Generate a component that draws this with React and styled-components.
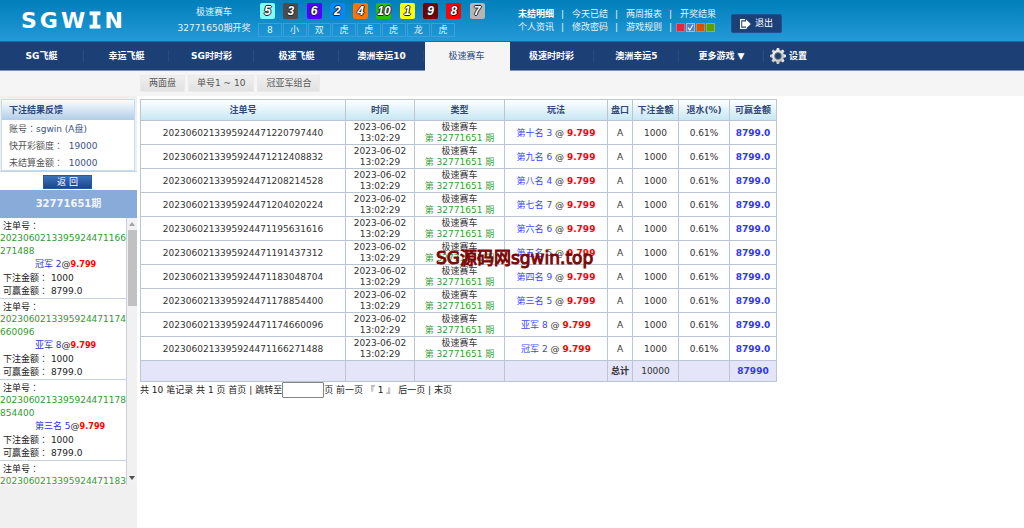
import React from "react";
import styled, { createGlobalStyle } from "styled-components";

const GlobalStyle = createGlobalStyle`
  *, *::before, *::after { box-sizing: border-box; }
  body {
    margin: 0;
    background: #fff;
    color: #333;
    font-family: "DejaVu Sans", "Noto Sans CJK SC", sans-serif;
    font-size: 9px;
    line-height: 13px;
  }
  button, input { font: inherit; }
  a { color: inherit; text-decoration: none; }
`;

const Page = styled.div`
  display: flex;
  flex-direction: column;
  min-height: 100vh;
`;

/* ---------- header ---------- */
const Header = styled.header`
  display: flex;
  align-items: flex-start;
  height: 42px;
  background: linear-gradient(#007fbb, #2499d7);
  border-bottom: 1px solid #1b6ca6;
  color: #e4f3fb;
`;

const Logo = styled.div`
  display: flex;
  gap: 3px;
  width: 150px;
  padding: 8px 0 0 21px;
  color: #fff;
  font-size: 22px;
  font-weight: bold;
  line-height: 26px;
`;

const SlabLetter = styled.span`
  font-family: "DejaVu Sans Mono", monospace;
  -webkit-text-stroke: 1px #fff;
`;

const DrawTitle = styled.div`
  width: 108px;
  margin-right: 2px;
  padding: 4px 0 0 20px;
  text-align: center;
  line-height: 16px;
  white-space: nowrap;
`;

const Draw = styled.div`
  display: flex;
  flex-direction: column;
  gap: 4px;
  width: 258px;
  padding-top: 3px;
`;

const Balls = styled.div`
  display: grid;
  grid-template-columns: repeat(10, 1fr);
  width: 233px;
`;

const Ball = styled.span`
  width: 15px;
  height: 16px;
  border-radius: 2px;
  background: ${(p) => p.$color};
  color: #fff;
  font-size: 12px;
  font-weight: bold;
  font-style: italic;
  line-height: 16px;
  display: flex;
  justify-content: center;
  font-family: "Liberation Sans", sans-serif;
  text-shadow: 1px 0 #222, -1px 0 #222, 0 1px #222, 0 -1px #222;
`;

const Traits = styled.div`
  display: grid;
  grid-template-columns: repeat(8, 1fr);
  gap: 1px;
  width: 197px;
  margin-left: -2px;
`;

const Trait = styled.span`
  height: 14px;
  border: 1px solid #36a1da;
  text-align: center;
  line-height: 12px;
`;

const Links = styled.nav`
  display: grid;
  grid-template-columns: repeat(4, 36px);
  column-gap: 18px;
  padding-top: 8px;
  width: 213px;
  white-space: nowrap;
`;

const TopLink = styled.a`
  position: relative;
  font-weight: ${(p) => (p.$strong ? "bold" : "normal")};
  color: ${(p) => (p.$strong ? "#fff" : "#e4f3fb")};
  &:not(:nth-child(4n + 1))::before {
    content: "|";
    position: absolute;
    left: -11px;
  }
`;

const Skins = styled.div`
  position: relative;
  display: flex;
  gap: 1px;
  margin-left: -4px;
  padding-top: 2px;
  &::before {
    content: "|";
    position: absolute;
    top: 0;
    left: -7px;
  }
`;

const Skin = styled.button`
  display: block;
  width: 9px;
  height: 9px;
  padding: 0;
  border: 1px solid ${(p) => p.$edge};
  background: ${(p) => p.$color};
  svg { display: block; }
`;

const Logout = styled.button`
  display: flex;
  align-items: center;
  justify-content: center;
  gap: 4px;
  width: 51px;
  height: 19px;
  margin-top: 14px;
  padding: 0;
  border: 1px solid #1d5490;
  border-radius: 2px;
  background: #1c4078;
  color: #fff;
`;

/* ---------- navigation ---------- */
const Nav = styled.nav`
  display: flex;
  height: 29px;
  background: #1c4076;
  border-bottom: 1px solid #7d92b6;
  color: #fff;
  font-weight: bold;
`;

const NavItem = styled.a`
  width: 85px;
  height: ${(p) => (p.$active ? "29px" : "28px")};
  padding-right: 2px;
  line-height: 28px;
  text-align: center;
  background: ${(p) =>
    p.$active
      ? "#f5f5f5"
      : "linear-gradient(#24507f, #24507f) right 1px center / 1px 12px no-repeat"};
  color: ${(p) => (p.$active ? "#2b4a7c" : "#fff")};
  font-weight: ${(p) => (p.$active ? "normal" : "bold")};
`;

const Settings = styled.a`
  display: flex;
  align-items: center;
  gap: 3px;
  padding-left: 5px;
`;

const SubNav = styled.div`
  display: flex;
  gap: 3px;
  height: 25px;
  padding: 4px 0 0 140px;
  background: #f5f5f5;
`;

const SubButton = styled.button`
  height: 17px;
  padding: 0 8px;
  border: 1px solid #eaeaea;
  background: linear-gradient(#efefef, #e2e2e2);
  color: #555;
  line-height: 15px;
`;

/* ---------- body ---------- */
const Body = styled.div`
  display: flex;
  flex: 1;
`;

const Sidebar = styled.aside`
  width: 137px;
  flex: none;
  background: #f0f0f0;
`;

const Account = styled.section`
  margin: 3px 2px 0 1px;
  height: 72px;
  border: 1px solid #c3dcf2;
  background: #fff;
`;

const AccountTitle = styled.h2`
  margin: 0;
  height: 20px;
  padding-left: 7px;
  background: linear-gradient(#fafcfe, #b2cee8);
  color: #2a4878;
  font-size: 9px;
  line-height: 21px;
`;

const AccountLine = styled.p`
  margin: 0;
  padding-left: 7px;
  height: 17px;
  line-height: 17px;
  color: #555;
  white-space: pre;
`;

const AccountValue = styled.span`
  color: #3a5285;
`;

/* full-width colon that sits in the middle of its cell */
const Colon = styled.span`
  font-family: "Noto Sans CJK TC", sans-serif;
  &::before { content: "："; }
`;

const BackRow = styled.div`
  display: flex;
  justify-content: center;
  height: 19px;
  padding-top: 3px;
  padding-right: 2px;
  background: #fff;
  border-top: 1px solid #c6d3e0;
`;

const BackButton = styled.button`
  width: 49px;
  height: 14px;
  padding: 0;
  border: 1px solid #2a59a0;
  background: linear-gradient(#3a72b8, #1d4690);
  color: #fff;
  line-height: 11px;
`;

const Period = styled.div`
  height: 28px;
  background: #89abd9;
  color: #f2f6fc;
  font-size: 10px;
  font-weight: bold;
  line-height: 28px;
  text-align: center;
`;

const BetScroller = styled.div`
  display: flex;
  height: 267px;
`;

const BetList = styled.ul`
  flex: 1;
  margin: 0;
  padding: 0;
  list-style: none;
  overflow: hidden;
  background: #fff;
`;

const BetItem = styled.li`
  padding: 1px 0;
  border-bottom: 1px solid #c9d0dc;
  color: #222;
`;

const BetLine = styled.div`
  padding-left: 3px;
  height: 13px;
  white-space: pre;
`;

const BetNumber = styled.div`
  color: #329a32;
  white-space: pre;
`;

const BetPick = styled.div`
  padding-left: 35px;
`;

const ScrollTrack = styled.div`
  display: flex;
  flex-direction: column;
  align-items: center;
  justify-content: space-between;
  flex: none;
  width: 11px;
  border-left: 1px solid #c9d0dc;
  background: #f1f1f1;
  padding: 4px 0 5px;
`;

const ScrollThumb = styled.div`
  width: 9px;
  height: 76px;
  margin: 4px 0 auto;
  background: #c1c1c1;
`;

const Main = styled.main`
  position: relative;
  flex: 1;
  padding: 3px 3px 0;
`;

const Table = styled.table`
  width: 636px;
  table-layout: fixed;
  border-collapse: collapse;
  line-height: 11px;
  text-align: center;
  white-space: nowrap;
  color: #333;
`;

const Th = styled.th`
  height: 21px;
  padding: 0;
  border: 1px solid #bcc5d2;
  color: #33487a;
`;

const HeadRow = styled.tr`
  background: linear-gradient(#fff, #c3e6f3);
`;

const Td = styled.td`
  height: 24px;
  padding: 1px 0 0;
  border: 1px solid #bcc5d2;
`;

const TotalRow = styled.tr`
  background: #e4e5f9;
  ${Td} { height: 21px; }
`;

const Blue = styled.span`
  color: #2836d6;
`;

const Pick = styled.span`
  color: #3b46ff;
`;

const Win = styled.b`
  color: #2f38ef;
`;

const Odds = styled.b`
  color: #f00;
`;

const SideOdds = styled.b`
  color: #f00;
  font-family: "DejaVu Sans Condensed", "DejaVu Sans", sans-serif;
`;

const Green = styled.span`
  color: #37a137;
`;

const Pager = styled.div`
  display: flex;
  align-items: center;
  height: 16px;
  white-space: pre;
  color: #222;
`;

const PageInput = styled.input`
  width: 42px;
  height: 16px;
  padding: 0 2px;
  border: 1px solid #858585;
  border-radius: 1px;
  background: #fff;
`;

const Watermark = styled.div`
  position: absolute;
  top: 152px;
  left: 299px;
  color: #7c0808;
  font-size: 17px;
  line-height: 20px;
  white-space: nowrap;
  -webkit-text-stroke: 1px #7c0808;
`;

const balls = [
  [5, "#80ffff"], [3, "#4c4c4c"], [6, "#5200ff"], [2, "#0089ff"], [4, "#ff7300"],
  [10, "#26c000"], [1, "#ffff00"], [9, "#760000"], [8, "#ff0000"], [7, "#b5b5b5"],
];
const traits = ["8", "小", "双", "虎", "虎", "虎", "龙", "虎"];
const games = [
  "SG飞艇", "幸运飞艇", "SG时时彩", "极速飞艇", "澳洲幸运10",
  "极速赛车", "极速时时彩", "澳洲幸运5", "更多游戏 ▼",
];
const bets = [
  ["2023060213395924471220797440", "第十名 3"],
  ["2023060213395924471212408832", "第九名 6"],
  ["2023060213395924471208214528", "第八名 4"],
  ["2023060213395924471204020224", "第七名 7"],
  ["2023060213395924471195631616", "第六名 6"],
  ["2023060213395924471191437312", "第五名 5"],
  ["2023060213395924471183048704", "第四名 9"],
  ["2023060213395924471178854400", "第三名 5"],
  ["2023060213395924471174660096", "亚军 8"],
  ["2023060213395924471166271488", "冠军 2"],
];
const recent = [...bets].reverse().slice(0, 4);
const columns = [
  ["注单号", 205], ["时间", 69], ["类型", 90], ["玩法", 103], ["盘口", 25],
  ["下注金额", 46], ["退水(%)", 51], ["可赢金额", 47],
];

const GearIcon = () => (
  <svg width="16" height="16" viewBox="-8 -8 16 16" aria-hidden="true">
    <defs>
      <linearGradient id="metal" x1="0" y1="0" x2="1" y2="1">
        <stop offset="0" stopColor="#fff" />
        <stop offset="1" stopColor="#b4b4b0" />
      </linearGradient>
    </defs>
    <g fill="url(#metal)">
      {[0, 45, 90, 135].map((a) => (
        <path key={a} transform={`rotate(${a})`} d="M-1.8 -5 L-1.2 -8 H1.2 L1.8 -5 V5 L1.2 8 H-1.2 L-1.8 5 Z" />
      ))}
      <circle r="6" />
    </g>
    <circle r="3.4" fill="#1c4076" stroke="#85857f" strokeWidth="0.8" />
  </svg>
);

const ExitIcon = () => (
  <svg width="11" height="10" viewBox="0 0 11 10" aria-hidden="true">
    <path d="M5 .6 H.6 V9.4 H6.5" fill="none" stroke="#fff" strokeWidth="1.2" />
    <path d="M2.2 2.4 H6 V.6 L10.8 5 L6 9.4 V7.6 H2.2 Z" fill="#fff" />
  </svg>
);

export default function App() {
  return (
    <Page>
      <GlobalStyle />
      <Header>
        <Logo>
          <span>S</span><span>G</span><span>W</span><SlabLetter>I</SlabLetter><span>N</span>
        </Logo>
        <DrawTitle>
          <div>极速赛车</div>
          <div>32771650期开奖</div>
        </DrawTitle>
        <Draw>
          <Balls>
            {balls.map(([n, c]) => <Ball key={n} $color={c}>{n}</Ball>)}
          </Balls>
          <Traits>
            {traits.map((t, i) => <Trait key={i}>{t}</Trait>)}
          </Traits>
        </Draw>
        <Links>
          <TopLink href="#" $strong>未结明细</TopLink>
          <TopLink href="#">今天已结</TopLink>
          <TopLink href="#">两周报表</TopLink>
          <TopLink href="#">开奖结果</TopLink>
          <TopLink href="#">个人资讯</TopLink>
          <TopLink href="#">修改密码</TopLink>
          <TopLink href="#">游戏规则</TopLink>
          <Skins>
            <Skin aria-label="red" $color="#e0283c" $edge="#e8606c" />
            <Skin aria-label="blue" $color="#4f82c6" $edge="#9db9dd">
              <svg width="7" height="7" viewBox="0 0 7 7">
                <path d="M1 3.6 L2.8 6 L6 .8" fill="none" stroke="#fff" strokeWidth="1.1" />
              </svg>
            </Skin>
            <Skin aria-label="orange" $color="#d75200" $edge="#d9803c" />
            <Skin aria-label="green" $color="#5fa000" $edge="#88b94c" />
          </Skins>
        </Links>
        <Logout><ExitIcon />退出</Logout>
      </Header>
      <Nav>
        {games.map((g) => <NavItem key={g} href="#" $active={g === "极速赛车"}>{g}</NavItem>)}
        <Settings href="#"><GearIcon />设置</Settings>
      </Nav>
      <SubNav>
        <SubButton>两面盘</SubButton>
        <SubButton>单号1 ~ 10</SubButton>
        <SubButton>冠亚军组合</SubButton>
      </SubNav>
      <Body>
        <Sidebar>
          <Account>
            <AccountTitle>下注结果反馈</AccountTitle>
            <AccountLine>账号<Colon /><AccountValue>sgwin (A盘)</AccountValue></AccountLine>
            <AccountLine>快开彩额度<Colon />  <AccountValue>19000</AccountValue></AccountLine>
            <AccountLine>未结算金额<Colon />  <AccountValue>10000</AccountValue></AccountLine>
          </Account>
          <BackRow><BackButton>返 回</BackButton></BackRow>
          <Period>32771651期</Period>
          <BetScroller>
            <BetList>
              {recent.map(([id, pick]) => (
                <BetItem key={id}>
                  <BetLine>注单号<Colon /></BetLine>
                  <BetNumber>{id.slice(0, 22)}{"\n"}{id.slice(22)}</BetNumber>
                  <BetPick><Blue>{pick}</Blue>@<SideOdds>9.799</SideOdds></BetPick>
                  <BetLine>下注金额<Colon /> 1000</BetLine>
                  <BetLine>可赢金额<Colon /> 8799.0</BetLine>
                </BetItem>
              ))}
            </BetList>
            <ScrollTrack>
              <svg width="6" height="4" viewBox="0 0 6 4"><path d="M0 4 L3 0 L6 4 Z" fill="#a3a3a3" /></svg>
              <ScrollThumb />
              <svg width="6" height="4" viewBox="0 0 6 4"><path d="M0 0 L3 4 L6 0 Z" fill="#505050" /></svg>
            </ScrollTrack>
          </BetScroller>
        </Sidebar>
        <Main>
          <Table>
            <colgroup>
              {columns.map(([name, w]) => <col key={name} width={w} />)}
            </colgroup>
            <thead>
              <HeadRow>{columns.map(([name]) => <Th key={name}>{name}</Th>)}</HeadRow>
            </thead>
            <tbody>
              {bets.map(([id, pick]) => (
                <tr key={id}>
                  <Td>{id}</Td>
                  <Td>2023-06-02<br />13:02:29</Td>
                  <Td>极速赛车<br /><Green>第 32771651 期</Green></Td>
                  <Td><Pick>{pick}</Pick> @ <Odds>9.799</Odds></Td>
                  <Td>A</Td>
                  <Td>1000</Td>
                  <Td>0.61%</Td>
                  <Td><Win>8799.0</Win></Td>
                </tr>
              ))}
              <TotalRow>
                <Td /><Td /><Td /><Td />
                <Td><b>总计</b></Td>
                <Td>10000</Td>
                <Td />
                <Td><Win>87990</Win></Td>
              </TotalRow>
            </tbody>
          </Table>
          <Pager>
            <span>共 10 笔记录 共 1 页 <a href="#">首页</a> | </span>
            <label htmlFor="page">跳转至</label>
            <PageInput id="page" type="text" />
            <span>页 <a href="#">前一页</a> 『 1 』 <a href="#">后一页</a> | <a href="#">末页</a></span>
          </Pager>
          <Watermark>SG源码网sgwin.top</Watermark>
        </Main>
      </Body>
    </Page>
  );
}
